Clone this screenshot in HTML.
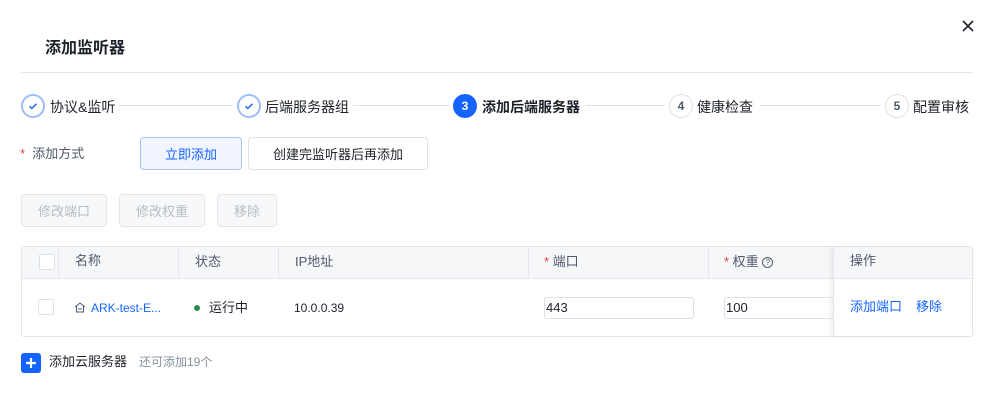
<!DOCTYPE html>
<html><head><meta charset="utf-8"><style>
*{box-sizing:border-box;margin:0;padding:0}
body{width:997px;height:411px;background:#fff;font-family:"Liberation Sans","Noto Sans CJK SC",sans-serif;position:relative;overflow:hidden;color:#1d2129}
.a{position:absolute}
.t{font-size:13px;white-space:nowrap;line-height:16px}
.ck{position:absolute;width:16px;height:16px;border:1px solid #dde2e9;border-radius:2px;background:#fff}
.btn{position:absolute;height:33px;border:1px solid #dde2e9;border-radius:4px;font-size:13px;display:flex;align-items:center;justify-content:center}
.dis{background:#f6f8fa;color:#b7bcc4;border-color:#e3e6ea}
.step{position:absolute;top:94px;width:24px;height:24px;border-radius:50%;display:flex;align-items:center;justify-content:center;font-size:12px;font-weight:bold}
.line{position:absolute;top:105px;height:1px;background:#dde2e9}
.st{position:absolute;top:97px;font-size:14px}
.red{color:#e63f3f}
</style></head><body>
<div class="a" style="left:45px;top:34px;font-size:16px;font-weight:bold">添加监听器</div>
<svg class="a" style="left:962px;top:20px" width="12" height="12" viewBox="0 0 12 12"><path d="M1 1L11 11M11 1L1 11" stroke="#1d2129" stroke-width="1.6"/></svg>
<div class="a" style="left:21px;top:72px;width:952px;height:1px;background:#e5e6eb"></div>

<div class="step" style="left:21px;border:2px solid #9ebcf7;color:#1664ff"><svg width="12" height="12" viewBox="0 0 12 12"><path d="M2.5 6.2l2.3 2.3 4.7-4.8" fill="none" stroke="#1664ff" stroke-width="1.4"/></svg></div>
<div class="st" style="left:50px">协议&amp;监听</div>
<div class="line" style="left:119px;width:114px"></div>
<div class="step" style="left:237px;border:2px solid #9ebcf7"><svg width="12" height="12" viewBox="0 0 12 12"><path d="M2.5 6.2l2.3 2.3 4.7-4.8" fill="none" stroke="#1664ff" stroke-width="1.4"/></svg></div>
<div class="st" style="left:265px">后端服务器组</div>
<div class="line" style="left:353px;width:96px"></div>
<div class="step" style="left:453px;background:#1664ff;color:#fff">3</div>
<div class="st" style="left:482px;font-weight:bold">添加后端服务器</div>
<div class="line" style="left:586px;width:79px"></div>
<div class="step" style="left:669px;border:1px solid #dde2e9;color:#4e5969">4</div>
<div class="st" style="left:697px">健康检查</div>
<div class="line" style="left:760px;width:121px"></div>
<div class="step" style="left:885px;border:1px solid #dde2e9;color:#4e5969">5</div>
<div class="st" style="left:913px">配置审核</div>

<div class="a t" style="left:20px;top:146px"><span class="red">*</span>&nbsp; <span style="color:#4e5969">添加方式</span></div>
<div class="btn" style="left:140px;top:137px;width:102px;background:#f0f5ff;border-color:#a8c4fa;color:#1664ff">立即添加</div>
<div class="btn" style="left:248px;top:137px;width:180px;color:#1d2129">创建完监听器后再添加</div>

<div class="btn dis" style="left:21px;top:194px;width:86px">修改端口</div>
<div class="btn dis" style="left:119px;top:194px;width:86px">修改权重</div>
<div class="btn dis" style="left:217px;top:194px;width:60px">移除</div>

<div class="a" style="left:21px;top:246px;width:952px;height:91px;border:1px solid #e5e6eb;border-radius:3px"></div>
<div class="a" style="left:22px;top:247px;width:950px;height:32px;background:#f6f7f9;border-bottom:1px solid #e5e6eb"></div>
<div class="a" style="left:58px;top:247px;width:1px;height:32px;background:#e5e6eb"></div>
<div class="a" style="left:178px;top:247px;width:1px;height:32px;background:#e5e6eb"></div>
<div class="a" style="left:278px;top:247px;width:1px;height:32px;background:#e5e6eb"></div>
<div class="a" style="left:528px;top:247px;width:1px;height:32px;background:#e5e6eb"></div>
<div class="a" style="left:708px;top:247px;width:1px;height:32px;background:#e5e6eb"></div>
<div class="a" style="left:833px;top:247px;width:140px;height:89px;box-shadow:-3px 0 5px rgba(0,0,0,0.06);border-left:1px solid #e5e6eb;background:transparent"></div>
<div class="ck" style="left:39px;top:254px"></div>
<div class="a t" style="left:75px;top:253px;color:#4e5969">名称</div>
<div class="a t" style="left:195px;top:254px;color:#4e5969">状态</div>
<div class="a t" style="left:295px;top:254px;color:#4e5969">IP地址</div>
<div class="a t" style="left:544px;top:254px;color:#4e5969"><span class="red">*</span> 端口</div>
<div class="a t" style="left:724px;top:254px;color:#4e5969"><span class="red">*</span> 权重 <span style="display:inline-block;width:11px;height:11px;border:1px solid #4e5969;border-radius:50%;font-size:8px;line-height:9px;text-align:center;vertical-align:1px">?</span></div>
<div class="a t" style="left:850px;top:253px;color:#4e5969">操作</div>

<div class="ck" style="left:38px;top:299px"></div>
<svg class="a" style="left:74px;top:302px" width="12" height="11" viewBox="0 0 12 11"><path d="M1 5L6 1l5 4M2.5 4v6h7V4M4 7h4" fill="none" stroke="#4e5969" stroke-width="1"/></svg>
<div class="a t" style="left:91px;top:300px;color:#1664ff;font-size:12px">ARK-test-E...</div>
<div class="a" style="left:194px;top:305px;width:6px;height:6px;border-radius:50%;background:#2a8c4a"></div>
<div class="a t" style="left:209px;top:300px">运行中</div>
<div class="a t" style="left:294px;top:300px;font-size:12px">10.0.0.39</div>
<div class="a" style="left:544px;top:297px;width:150px;height:22px;border:1px solid #dde2e9;border-radius:3px;font-size:13px;line-height:20px;padding-left:1px">443</div>
<div class="a" style="left:724px;top:297px;width:110px;height:22px;border:1px solid #dde2e9;border-right:none;border-radius:3px 0 0 3px;font-size:13px;line-height:20px;padding-left:1px">100</div>
<div class="a t" style="left:850px;top:299px;color:#1664ff">添加端口</div>
<div class="a t" style="left:916px;top:299px;color:#1664ff">移除</div>

<svg class="a" style="left:21px;top:353px" width="20" height="20" viewBox="0 0 20 20"><rect width="20" height="20" rx="3" fill="#1664ff"/><path d="M10 5v10M5 10h10" stroke="#fff" stroke-width="2.2"/></svg>
<div class="a t" style="left:49px;top:354px">添加云服务器</div>
<div class="a t" style="left:139px;top:354px;color:#86909c;font-size:12px">还可添加19个</div>
</body></html>
